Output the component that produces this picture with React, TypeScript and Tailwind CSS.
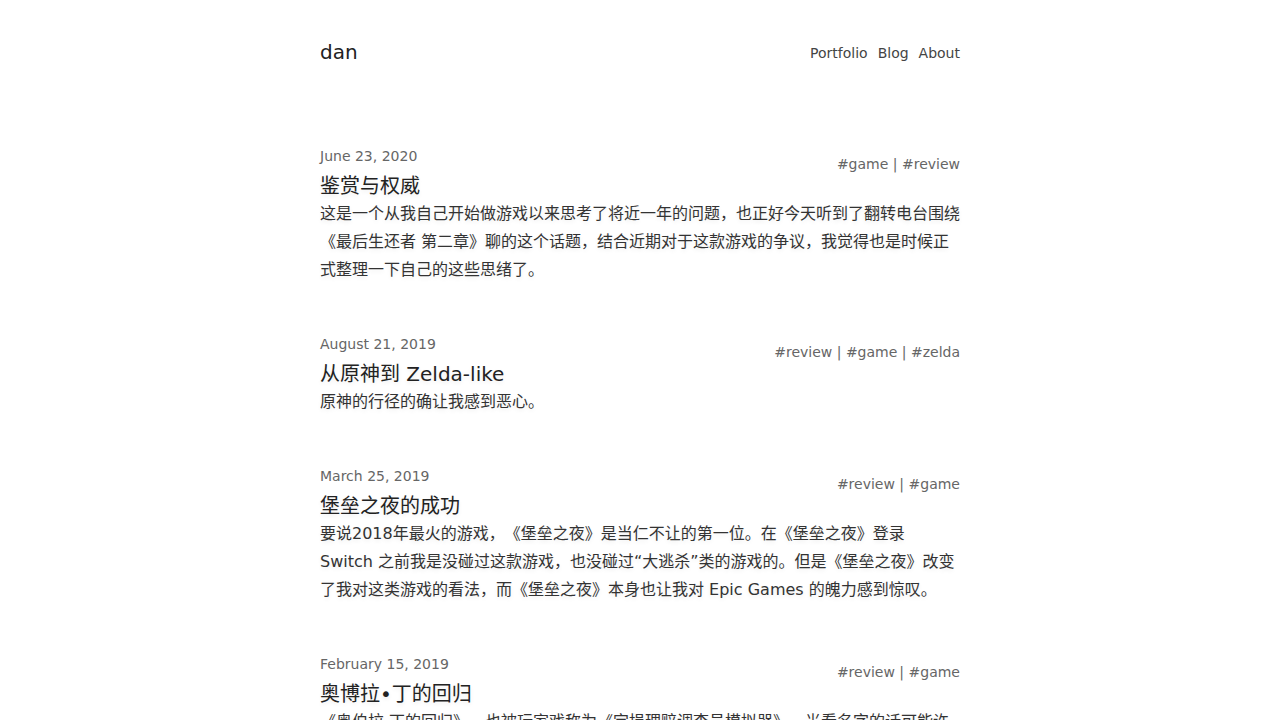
import React from "react";

type Post = {
  date: string;
  tags: string[];
  title: string;
  body: string;
};

const posts: Post[] = [
  {
    date: "June 23, 2020",
    tags: ["#game", "#review"],
    title: "鉴赏与权威",
    body: "这是一个从我自己开始做游戏以来思考了将近一年的问题，也正好今天听到了翻转电台围绕《最后生还者 第二章》聊的这个话题，结合近期对于这款游戏的争议，我觉得也是时候正式整理一下自己的这些思绪了。",
  },
  {
    date: "August 21, 2019",
    tags: ["#review", "#game", "#zelda"],
    title: "从原神到 Zelda-like",
    body: "原神的行径的确让我感到恶心。",
  },
  {
    date: "March 25, 2019",
    tags: ["#review", "#game"],
    title: "堡垒之夜的成功",
    body: "要说2018年最火的游戏，《堡垒之夜》是当仁不让的第一位。在《堡垒之夜》登录 Switch 之前我是没碰过这款游戏，也没碰过“大逃杀”类的游戏的。但是《堡垒之夜》改变了我对这类游戏的看法，而《堡垒之夜》本身也让我对 Epic Games 的魄力感到惊叹。",
  },
  {
    date: "February 15, 2019",
    tags: ["#review", "#game"],
    title: "奥博拉•丁的回归",
    body: "《奥伯拉·丁的回归》，也被玩家戏称为《定损理赔调查员模拟器》，光看名字的话可能许多人会觉得这是一款枯燥乏味的游戏，但它却是我去年玩过的最好的游戏之一。",
  },
];

export default function App() {
  return (
    <div className="min-h-screen bg-white">
      <div className="mx-auto w-[640px] font-['DejaVu_Sans','Noto_Sans_CJK_SC',sans-serif] [text-spacing-trim:space-all]">
        <header className="mt-10 flex h-6 items-center justify-between">
          <div className="text-[20px] leading-6 text-[#222]">dan</div>
          <nav className="mt-[2px] flex gap-[10px] text-[14px] leading-6 text-[#444]">
            <span>Portfolio</span>
            <span>Blog</span>
            <span>About</span>
          </nav>
        </header>

        <main className="mt-[82px]">
          {posts.map((p) => (
            <article key={p.date} className="mb-[50px]">
              <div className="flex items-start justify-between">
                <div>
                  <div className="text-[14px] leading-5 text-[#666]">{p.date}</div>
                  <h2 className="mt-[6px] text-[20px] leading-7 text-[#222] [text-shadow:0_2px_4px_rgba(0,0,0,0.08)]">
                    {p.title}
                  </h2>
                </div>
                <div className="mt-2 text-[14px] leading-5 text-[#666]">
                  {p.tags.join(" | ")}
                </div>
              </div>
              <p className="text-[16px] leading-7 text-[#333] [text-shadow:0_2px_4px_rgba(0,0,0,0.08)]">
                {p.body}
              </p>
            </article>
          ))}
        </main>
      </div>
    </div>
  );
}
